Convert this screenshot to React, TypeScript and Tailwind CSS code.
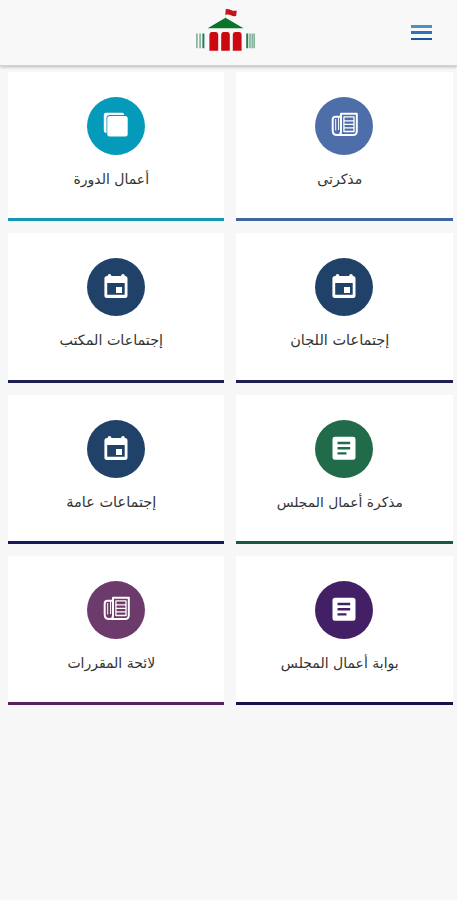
import { ReactNode } from 'react'

interface MenuCard {
  label: string
  icon: ReactNode
  circle: string
  border: string
  text: string
}

function CopiesIcon() {
  return (
    <svg viewBox="0 0 58 58" className="w-full h-full">
      <path d="M18.500 15.800h16.500a2.200 2.200 0 0 1 2.200 2.200h-14.700a3 3 0 0 0-3 3v15a2.700 2.700 0 0 1-2.700-2.700v-15.500a2 2 0 0 1 1.700-2z" fill="#fff" />
      <rect x="20.300" y="18.900" width="20.400" height="20.600" rx="2.500" fill="#fff" />
    </svg>
  )
}

function NewspaperIcon() {
  return (
    <svg viewBox="0 0 58 58" className="w-full h-full" fill="none" stroke="#fff">
      <path d="M26 19.800h-5.500q-2.800 0-2.800 2.700v11q0 4.500 4.500 4.500h15.800q3.800 0 3.800-3.800V16.800H26v17.700q0 3.500-3 3.500" strokeWidth="2" strokeLinejoin="round" />
      <path d="M20.700 22v11.500M23.600 20v13" strokeWidth="1" />
      <path d="M29 19.800h10M29 23.800h10M29 27.300h10M29 30.800h10M29 34.500h10M28.900 19.500v15.500M39 19.500v15.500" strokeWidth="1.300" />
    </svg>
  )
}

function CalendarIcon() {
  return (
    <svg viewBox="0 0 58 58" className="w-full h-full" fill="#fff">
      <path
        fillRule="evenodd"
        d="M20.600 18a1.900 1.900 0 0 1 3.800 0h9.700a1.900 1.900 0 0 1 3.800 0a2.600 2.600 0 0 1 2.600 2.600v16.900a2.500 2.500 0 0 1-2.500 2.500H19.900a2.500 2.500 0 0 1-2.500-2.500V20.600a2.600 2.600 0 0 1 3.200-2.600zM20.200 25v11.800h17.500v-11.800z"
      />
      <rect x="29" y="29" width="6" height="6" />
    </svg>
  )
}

function ArticleIcon() {
  return (
    <svg viewBox="0 0 58 58" className="w-full h-full" fill="#fff">
      <path
        fillRule="evenodd"
        d="M20 16.700h18a2.500 2.500 0 0 1 2.500 2.500v18a2.500 2.500 0 0 1-2.500 2.500H20a2.500 2.500 0 0 1-2.500-2.500v-18a2.500 2.500 0 0 1 2.500-2.500zM22.500 21.800v2.400h12.700v-2.400zM22.500 27v2.400h12.700v-2.400zM22.500 32.200v2.400h9v-2.400z"
      />
    </svg>
  )
}

function Logo() {
  return (
    <svg width="60" height="56" viewBox="0 0 60 56">
      <path d="M30.500 14v5" stroke="#d5ddd6" strokeWidth="0.700" />
      <path d="M30.800 9q3-.3 5.200 1t5.800.6l-.7 5.500q-3 .5-5.300-.8t-5.500-.5z" fill="#c4141e" />
      <path d="M12.700 28.300l17.800-10.600 18 10.600z" fill="#0a7428" />
      <path d="M14.400 50.700v-16q0-2.600 2.200-2.600h4.400q2.200 0 2.200 2.600v16zM26.200 50.700v-16q0-2.600 2.200-2.600h4.200q2.200 0 2.200 2.600v16zM37.800 50.700v-16q0-2.600 2.200-2.600h4.400q2.200 0 2.200 2.600v16z" fill="#cc0910" />
      <path d="M1.900 33.500v14.700M5.100 33.500v14.700M55 33.500v14.700M57.300 33.500v14.700M59.300 33.500v14.700" stroke="#86b59b" strokeWidth="1.700" />
      <path d="M8.400 33.500v14.700M52.200 33.500v14.700" stroke="#218154" strokeWidth="2" />
    </svg>
  )
}

// Listed in reading order, right to left
const cards: MenuCard[] = [
  { label: 'مذكرتى', icon: <NewspaperIcon />, circle: 'bg-[#4e6eaa]', border: 'border-[#40659f]', text: 'text-[14px]' },
  { label: 'أعمال الدورة', icon: <CopiesIcon />, circle: 'bg-[#049aba]', border: 'border-[#1298b4]', text: 'text-[14px]' },
  { label: 'إجتماعات اللجان', icon: <CalendarIcon />, circle: 'bg-[#204168]', border: 'border-[#1e2054]', text: 'text-[14.500px]' },
  { label: 'إجتماعات المكتب', icon: <CalendarIcon />, circle: 'bg-[#204168]', border: 'border-[#1e2054]', text: 'text-[14.300px]' },
  { label: 'مذكرة أعمال المجلس', icon: <ArticleIcon />, circle: 'bg-[#216b4b]', border: 'border-[#16593f]', text: 'text-[13.800px]' },
  { label: 'إجتماعات عامة', icon: <CalendarIcon />, circle: 'bg-[#204168]', border: 'border-[#17195c]', text: 'text-[14.500px]' },
  { label: 'بوابة أعمال المجلس', icon: <ArticleIcon />, circle: 'bg-[#431f66]', border: 'border-[#1d104a]', text: 'text-[14px]' },
  { label: 'لائحة المقررات', icon: <NewspaperIcon />, circle: 'bg-[#6d3b6b]', border: 'border-[#58215a]', text: 'text-[14px]' },
]

function Card({ card }: { card: MenuCard }) {
  return (
    <a className={`flex h-[149.300px] flex-col items-center border-b-[3px] bg-white pt-[25px] ${card.border}`}>
      <span className={`h-[58px] w-[58px] rounded-full ${card.circle}`}>{card.icon}</span>
      <span className={`mt-[14px] whitespace-nowrap pr-[9px] leading-5 text-[#333] ${card.text}`}>{card.label}</span>
    </a>
  )
}

export default function App() {
  return (
    <div dir="rtl" className="h-[900px] w-[457px] overflow-hidden bg-[#f7f7f7] font-['DejaVu_Sans',sans-serif]">
      <header className="flex h-[66px] items-start justify-between border-b border-[#d2d2d2] bg-[#f8f8f8] pl-[195px] pr-[25px] shadow-[0_1px_3px_rgba(0,0,0,0.25)]">
        <button className="mt-[25px] flex h-[15px] w-[21px] flex-col justify-between">
          <span className="h-[2.500px] w-full bg-[#4a91c5]" />
          <span className="h-[2.500px] w-full bg-[#2e74b5]" />
          <span className="h-[2.500px] w-full bg-[#1a569e]" />
        </button>
        <Logo />
      </header>
      <main className="grid grid-cols-2 gap-3 pl-[7.500px] pr-[4.500px] pt-[6px]">
        {cards.map((card) => (
          <Card key={card.label} card={card} />
        ))}
      </main>
    </div>
  )
}
